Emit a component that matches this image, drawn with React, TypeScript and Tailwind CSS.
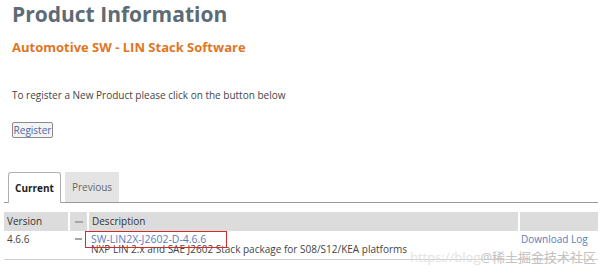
import React from "react";

export default function App() {
  return (
    <div
      className="relative w-[610px] h-[275px] overflow-hidden bg-white"
      style={{ fontFamily: '"Open Sans", "Noto Sans", sans-serif' }}
    >
      <div className="px-3 pt-[1px]">
        <h1 className="text-[21px] font-bold leading-[26px] text-[#5d6b75]">
          Product Information
        </h1>
        <h2 className="mt-[11px] text-[13px] font-bold leading-[18px] text-[#e0761f]">
          Automotive SW - LIN Stack Software
        </h2>
        <p className="mt-[32px] text-[10px] leading-[14px] text-[#444]">
          To register a New Product please click on the button below
        </p>
        <button className="block mt-[20px] h-[16px] w-[41px] border border-[#8a8a8a] rounded-[2px] bg-[#f4f4f4] text-[10px] leading-[13px] text-[#4b67a6]">
          Register
        </button>
      </div>

      <div className="mt-[34px] ml-[4px] w-[594px]">
        {/* tabs */}
        <div className="flex items-end gap-[4px] pl-[4px] border-b border-[#9a9a9a] h-[31px]">
          <div className="h-[31px] -mb-px w-[53px] flex items-center justify-center border border-b-0 border-[#b0b0b0] rounded-t-[3px] bg-white text-[10px] font-bold text-[#222]">
            Current
          </div>
          <div className="h-[30px] w-[54px] flex items-center justify-center bg-[#e4e4e4] text-[10px] text-[#666]">
            Previous
          </div>
        </div>

        {/* table */}
        <div className="mt-[9px] text-[10px]">
          <div className="flex h-[19px] text-[#333] gap-[2px]">
            <div className="w-[64px] bg-[#dcdcdc] pl-[3px] flex items-center">Version</div>
            <div className="w-[17px] bg-[#dcdcdc] flex items-center justify-center">
              <div className="w-[8px] h-[2px] bg-[#a6a6a6]" />
            </div>
            <div className="w-[429px] bg-[#dcdcdc] pl-[3px] flex items-center">Description</div>
            <div className="flex-1 bg-[#dcdcdc]" />
          </div>
          <div className="flex gap-[2px] border-b border-[#cfcfcf] h-[29px]">
            <div className="w-[64px] pl-[3px] pt-[1px] leading-[14px] text-[#444]">4.6.6</div>
            <div className="w-[17px] flex justify-center pt-[7px]">
              <div className="w-[7px] h-[2px] bg-[#a6a6a6]" />
            </div>
            <div className="w-[429px] pl-[2px] pt-[3px] leading-[10px] text-[#444]">
              <div className="text-[10.5px] text-[#5b7bb8]">SW-LIN2X-J2602-D-4.6.6</div>
              <div>NXP LIN 2.x and SAE J2602 Stack package for S08/S12/KEA platforms</div>
            </div>
            <div className="flex-1 pl-[1px] pt-[1px] leading-[14px] text-[#5b7bb8]">Download Log</div>
          </div>
        </div>
      </div>

      {/* annotation box */}
      <div className="absolute left-[85px] top-[231px] w-[142px] h-[17px] border border-[#d42a2a]" />

      <div
        className="absolute left-[410px] top-[250px] text-[13px] leading-[14px] whitespace-nowrap"
        style={{ fontFamily: '"Open Sans", "Noto Sans CJK SC", sans-serif' }}
      >
        <span className="text-[#e2e2e2]">https://blog</span>
        <span className="text-[#c2c2c2]">@稀土掘金技术社区</span>
      </div>
    </div>
  );
}
